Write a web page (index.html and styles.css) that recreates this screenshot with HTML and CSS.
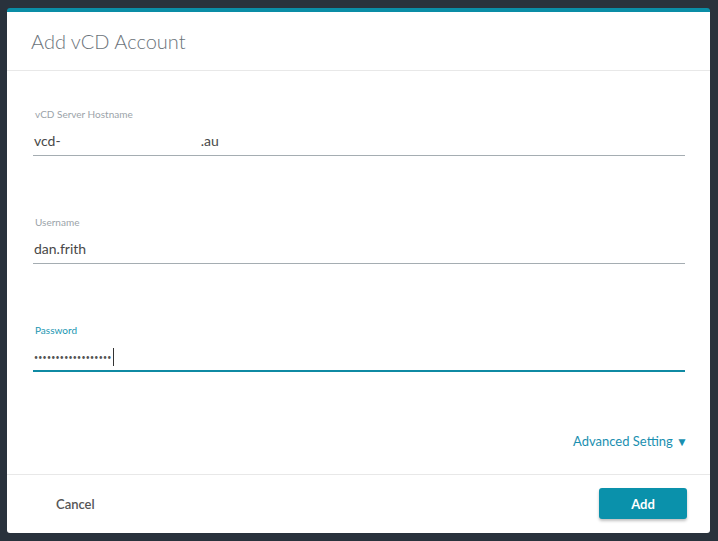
FILE: index.html
```html
<!DOCTYPE html>
<html lang="en">
<head>
    <meta charset="UTF-8">
    <meta name="viewport" content="width=device-width, initial-scale=1.0">
    <title>Add vCD Account</title>
    <link rel="stylesheet" href="styles.css">
</head>
<body>
    <div class="modal">
        <div class="modal-header">
            <h3 class="modal-title">Add vCD Account</h3>
        </div>

        <form class="modal-body" id="accountForm">
            <div class="field">
                <label for="hostname">vCD Server Hostname</label>
                <div class="input">vcd-<span class="masked"></span>.au</div>
            </div>

            <div class="field">
                <label for="username">Username</label>
                <div class="input">dan.frith</div>
            </div>

            <div class="field focused">
                <label for="password">Password</label>
                <div class="input"><span class="dots">••••••••••••••••••</span><span class="caret"></span></div>
            </div>

            <div class="advanced">
                <a href="#" class="advanced-link">Advanced Setting <span class="arrow">▼</span></a>
            </div>
        </form>

        <div class="modal-footer">
            <button type="button" class="btn btn-link">Cancel</button>
            <button type="submit" class="btn btn-primary" form="accountForm">Add</button>
        </div>
    </div>
</body>
</html>
```

FILE: styles.css
```css
body {
    margin: 0;
    background: #29323c;
    font-family: Lato, 'Open Sans', sans-serif;
    color: #333;
}

.modal {
    margin: 8px 8px 0 7px;
    width: 703px;
    height: 525px;
    box-sizing: border-box;
    background: #fff;
    border-top: 4px solid #0a8da6;
    border-radius: 3px;
    display: flex;
    flex-direction: column;
}

.modal-header {
    height: 59px;
    box-sizing: border-box;
    padding: 0 24px;
    display: flex;
    align-items: center;
    border-bottom: 1px solid #e8e8e8;
}

.modal-title {
    margin: 0;
    font-size: 20px;
    font-weight: 300;
    color: #6b737a;
}

.modal-body {
    flex: 1;
    padding: 37px 25px 0 26px;
}

.field {
    margin-bottom: 60px;
}

.field label {
    display: block;
    padding-left: 2px;
    font-size: 10px;
    line-height: 12px;
    color: #9ba3a9;
}

.field .input {
    padding: 12px 0 5px 1px;
    line-height: 18px;
    height: 18px;
    font-size: 14px;
    color: #484848;
    border-bottom: 1px solid #a5adb2;
    display: flex;
    align-items: center;
}

.masked {
    display: inline-block;
    width: 140px;
}

.field.focused label {
    color: #1a96b1;
}

.field.focused .input {
    padding-bottom: 4px;
    border-bottom: 2px solid #0f8aa3;
}

.dots {
    font-size: 7px;
    letter-spacing: 0.25px;
    color: #555;
}

.caret {
    display: inline-block;
    width: 1px;
    height: 18px;
    margin-left: 1px;
    background: #333;
}

.advanced {
    margin-top: -2px;
    text-align: right;
    margin-right: -3px;
}

.advanced-link {
    font-size: 13px;
    color: #1a8fb0;
    text-decoration: none;
}

.arrow {
    font-size: 12px;
}

.modal-footer {
    height: 59px;
    box-sizing: border-box;
    padding: 0 23px 0 25px;
    display: flex;
    align-items: center;
    justify-content: space-between;
    border-top: 1px solid #e8e8e8;
}

.btn {
    font-family: Lato, 'Open Sans', sans-serif;
    font-size: 13px;
    font-weight: 700;
    border: none;
    cursor: pointer;
}

.btn-link {
    background: none;
    color: #555;
    font-weight: 600;
    padding: 0 24px;
}

.btn-primary {
    width: 88px;
    height: 31px;
    margin-bottom: 1px;
    background: #0a91ab;
    color: #fff;
    border-radius: 3px;
    box-shadow: 0 2px 3px rgba(0, 0, 0, 0.25);
}
```
